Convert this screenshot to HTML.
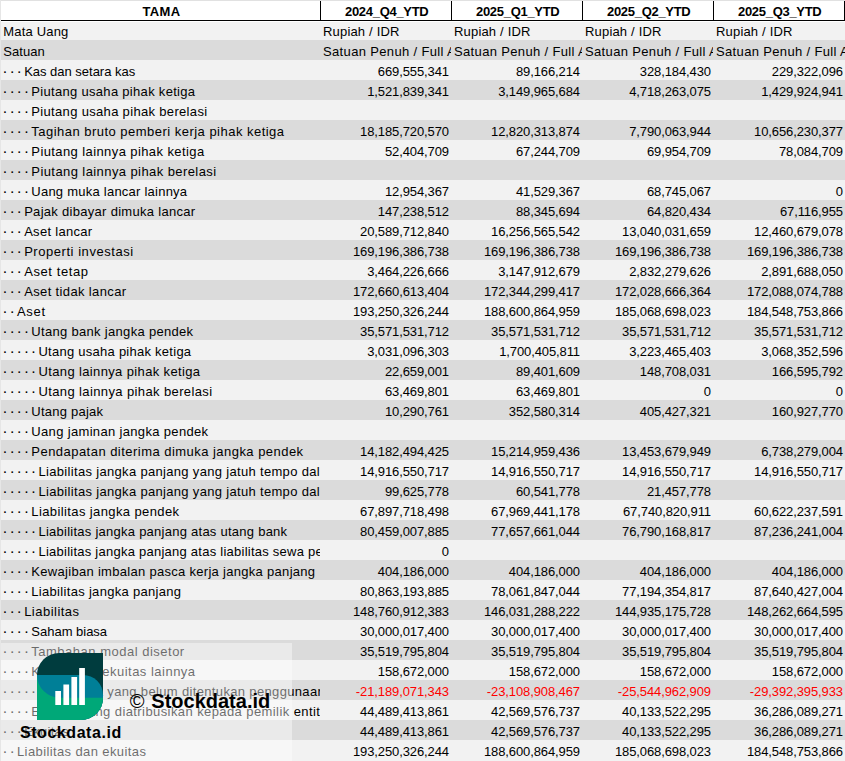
<!DOCTYPE html>
<html lang="id">
<head>
<meta charset="utf-8">
<title>TAMA</title>
<style>
html,body{margin:0;padding:0;}
body{width:845px;height:761px;overflow:hidden;position:relative;background:#f2f2f2;font-family:"Liberation Sans",sans-serif;font-size:13px;color:#000;}
.hd{position:absolute;left:0;top:0;width:845px;height:22px;background:#fff;box-sizing:border-box;border-top:1px solid #e1e1e1;border-bottom:1px solid #fff;font-weight:bold;z-index:2;}
.hd:after{content:"";position:absolute;left:0;top:19px;width:845px;height:1px;background:#000;}
.hd div{position:absolute;top:0;height:19px;line-height:21px;text-align:center;box-sizing:border-box;}
.hd .h0{left:0;width:320px;}
.hd .h1{left:320px;width:131px;border-left:1px solid #000;}
.hd .h2{left:451px;width:131px;border-left:1px solid #000;}
.hd .h3{left:582px;width:131px;border-left:1px solid #000;}
.hd .h4{left:713px;width:132px;border-left:1px solid #000;border-right:1px solid #000;}
.tb{position:absolute;left:0;top:20px;width:845px;}
.r{position:relative;height:20px;width:845px;}
.a{background:#f2f2f2;}
.b{background:#dbdbdb;}
.c{position:absolute;top:0;height:20px;line-height:24px;white-space:nowrap;overflow:hidden;box-sizing:border-box;text-align:right;padding-right:2px;}
.c0{left:0;width:320px;text-align:left;padding-left:2.7px;padding-right:0;}
.c1{left:321px;width:130px;}
.c2{left:452px;width:130px;}
.c3{left:583px;width:130px;}
.c4{left:714px;width:131px;}
.t{text-align:left;padding-left:2px;padding-right:0;}
.z{margin-left:0.6px;}
.n{color:#f00;}
.c1,.c2,.c3,.c4{letter-spacing:-0.1px;}
.t0{letter-spacing:0.18px;}
.t1{letter-spacing:0.35px;}
.hd .h1,.hd .h2,.hd .h3,.hd .h4{letter-spacing:-0.3px;padding-left:1.4px;}
.hd .h0{letter-spacing:0.4px;padding-left:3px;}
.d{font-size:10.5px;letter-spacing:0.37px;font-weight:bold;margin-left:0.8px;margin-right:-0.8px;}
.le{position:absolute;left:0;top:0;width:1px;height:761px;background:#e6e6e6;z-index:3;}
.ov{position:absolute;left:0;top:643px;width:292px;height:118px;background:rgba(255,255,255,.42);}
.logo{position:absolute;left:37px;top:653px;width:66px;height:67px;}
.wm1{position:absolute;left:20px;top:722px;font-weight:bold;font-size:16px;letter-spacing:0.55px;line-height:22px;white-space:nowrap;}
.wm2{position:absolute;left:129.7px;top:689px;font-size:20px;line-height:24px;white-space:nowrap;font-weight:bold;word-spacing:1.3px;}
.wm2 span{font-weight:normal;}
</style>
</head>
<body>
<div class="hd"><div class="h0">TAMA</div><div class="h1">2024_Q4_YTD</div><div class="h2">2025_Q1_YTD</div><div class="h3">2025_Q2_YTD</div><div class="h4">2025_Q3_YTD</div></div>
<div class="tb">
<div class="r a"><div class="c c0"><span class="z"></span><span style="letter-spacing:0.178px">Mata Uang</span></div><div class="c c1 t t0">Rupiah / IDR</div><div class="c c2 t t0">Rupiah / IDR</div><div class="c c3 t t0">Rupiah / IDR</div><div class="c c4 t t0">Rupiah / IDR</div></div>
<div class="r b"><div class="c c0"><span class="z"></span><span style="letter-spacing:0.063px">Satuan</span></div><div class="c c1 t t1">Satuan Penuh / Full Amount</div><div class="c c2 t t1">Satuan Penuh / Full Amount</div><div class="c c3 t t1">Satuan Penuh / Full Amount</div><div class="c c4 t t1">Satuan Penuh / Full Amount</div></div>
<div class="r a"><div class="c c0"><span class="d">· · · </span><span style="letter-spacing:-0.015px">Kas dan setara kas</span></div><div class="c c1">669,555,341</div><div class="c c2">89,166,214</div><div class="c c3">328,184,430</div><div class="c c4">229,322,096</div></div>
<div class="r b"><div class="c c0"><span class="d">· · · · </span><span style="letter-spacing:0.306px">Piutang usaha pihak ketiga</span></div><div class="c c1">1,521,839,341</div><div class="c c2">3,149,965,684</div><div class="c c3">4,718,263,075</div><div class="c c4">1,429,924,941</div></div>
<div class="r a"><div class="c c0"><span class="d">· · · · </span><span style="letter-spacing:0.327px">Piutang usaha pihak berelasi</span></div><div class="c c1"></div><div class="c c2"></div><div class="c c3"></div><div class="c c4"></div></div>
<div class="r b"><div class="c c0"><span class="d">· · · · </span><span style="letter-spacing:0.476px">Tagihan bruto pemberi kerja pihak ketiga</span></div><div class="c c1">18,185,720,570</div><div class="c c2">12,820,313,874</div><div class="c c3">7,790,063,944</div><div class="c c4">10,656,230,377</div></div>
<div class="r a"><div class="c c0"><span class="d">· · · · </span><span style="letter-spacing:0.404px">Piutang lainnya pihak ketiga</span></div><div class="c c1">52,404,709</div><div class="c c2">67,244,709</div><div class="c c3">69,954,709</div><div class="c c4">78,084,709</div></div>
<div class="r b"><div class="c c0"><span class="d">· · · · </span><span style="letter-spacing:0.416px">Piutang lainnya pihak berelasi</span></div><div class="c c1"></div><div class="c c2"></div><div class="c c3"></div><div class="c c4"></div></div>
<div class="r a"><div class="c c0"><span class="d">· · · · </span><span style="letter-spacing:0.238px">Uang muka lancar lainnya</span></div><div class="c c1">12,954,367</div><div class="c c2">41,529,367</div><div class="c c3">68,745,067</div><div class="c c4">0</div></div>
<div class="r b"><div class="c c0"><span class="d">· · · </span><span style="letter-spacing:0.294px">Pajak dibayar dimuka lancar</span></div><div class="c c1">147,238,512</div><div class="c c2">88,345,694</div><div class="c c3">64,820,434</div><div class="c c4">67,116,955</div></div>
<div class="r a"><div class="c c0"><span class="d">· · · </span><span style="letter-spacing:0.29px">Aset lancar</span></div><div class="c c1">20,589,712,840</div><div class="c c2">16,256,565,542</div><div class="c c3">13,040,031,659</div><div class="c c4">12,460,679,078</div></div>
<div class="r b"><div class="c c0"><span class="d">· · · </span><span style="letter-spacing:0.543px">Properti investasi</span></div><div class="c c1">169,196,386,738</div><div class="c c2">169,196,386,738</div><div class="c c3">169,196,386,738</div><div class="c c4">169,196,386,738</div></div>
<div class="r a"><div class="c c0"><span class="d">· · · </span><span style="letter-spacing:0.6px">Aset tetap</span></div><div class="c c1">3,464,226,666</div><div class="c c2">3,147,912,679</div><div class="c c3">2,832,279,626</div><div class="c c4">2,891,688,050</div></div>
<div class="r b"><div class="c c0"><span class="d">· · · </span><span style="letter-spacing:0.365px">Aset tidak lancar</span></div><div class="c c1">172,660,613,404</div><div class="c c2">172,344,299,417</div><div class="c c3">172,028,666,364</div><div class="c c4">172,088,074,788</div></div>
<div class="r a"><div class="c c0"><span class="d">· · </span><span style="letter-spacing:0.695px">Aset</span></div><div class="c c1">193,250,326,244</div><div class="c c2">188,600,864,959</div><div class="c c3">185,068,698,023</div><div class="c c4">184,548,753,866</div></div>
<div class="r b"><div class="c c0"><span class="d">· · · · </span><span style="letter-spacing:0.309px">Utang bank jangka pendek</span></div><div class="c c1">35,571,531,712</div><div class="c c2">35,571,531,712</div><div class="c c3">35,571,531,712</div><div class="c c4">35,571,531,712</div></div>
<div class="r a"><div class="c c0"><span class="d">· · · · · </span><span style="letter-spacing:0.257px">Utang usaha pihak ketiga</span></div><div class="c c1">3,031,096,303</div><div class="c c2">1,700,405,811</div><div class="c c3">3,223,465,403</div><div class="c c4">3,068,352,596</div></div>
<div class="r b"><div class="c c0"><span class="d">· · · · · </span><span style="letter-spacing:0.365px">Utang lainnya pihak ketiga</span></div><div class="c c1">22,659,001</div><div class="c c2">89,401,609</div><div class="c c3">148,708,031</div><div class="c c4">166,595,792</div></div>
<div class="r a"><div class="c c0"><span class="d">· · · · · </span><span style="letter-spacing:0.382px">Utang lainnya pihak berelasi</span></div><div class="c c1">63,469,801</div><div class="c c2">63,469,801</div><div class="c c3">0</div><div class="c c4">0</div></div>
<div class="r b"><div class="c c0"><span class="d">· · · · </span><span style="letter-spacing:0.24px">Utang pajak</span></div><div class="c c1">10,290,761</div><div class="c c2">352,580,314</div><div class="c c3">405,427,321</div><div class="c c4">160,927,770</div></div>
<div class="r a"><div class="c c0"><span class="d">· · · · </span><span style="letter-spacing:0.335px">Uang jaminan jangka pendek</span></div><div class="c c1"></div><div class="c c2"></div><div class="c c3"></div><div class="c c4"></div></div>
<div class="r b"><div class="c c0"><span class="d">· · · · </span><span style="letter-spacing:0.465px">Pendapatan diterima dimuka jangka pendek</span></div><div class="c c1">14,182,494,425</div><div class="c c2">15,214,959,436</div><div class="c c3">13,453,679,949</div><div class="c c4">6,738,279,004</div></div>
<div class="r a"><div class="c c0"><span class="d">· · · · · </span><span style="letter-spacing:0.322px">Liabilitas jangka panjang yang jatuh tempo dalam satu tahun atas utang bank</span></div><div class="c c1">14,916,550,717</div><div class="c c2">14,916,550,717</div><div class="c c3">14,916,550,717</div><div class="c c4">14,916,550,717</div></div>
<div class="r b"><div class="c c0"><span class="d">· · · · · </span><span style="letter-spacing:0.322px">Liabilitas jangka panjang yang jatuh tempo dalam satu tahun atas liabilitas sewa pembiayaan</span></div><div class="c c1">99,625,778</div><div class="c c2">60,541,778</div><div class="c c3">21,457,778</div><div class="c c4"></div></div>
<div class="r a"><div class="c c0"><span class="d">· · · · </span><span style="letter-spacing:0.392px">Liabilitas jangka pendek</span></div><div class="c c1">67,897,718,498</div><div class="c c2">67,969,441,178</div><div class="c c3">67,740,820,911</div><div class="c c4">60,622,237,591</div></div>
<div class="r b"><div class="c c0"><span class="d">· · · · · </span><span style="letter-spacing:0.253px">Liabilitas jangka panjang atas utang bank</span></div><div class="c c1">80,459,007,885</div><div class="c c2">77,657,661,044</div><div class="c c3">76,790,168,817</div><div class="c c4">87,236,241,004</div></div>
<div class="r a"><div class="c c0"><span class="d">· · · · · </span><span style="letter-spacing:0.246px">Liabilitas jangka panjang atas liabilitas sewa pembiayaan</span></div><div class="c c1">0</div><div class="c c2"></div><div class="c c3"></div><div class="c c4"></div></div>
<div class="r b"><div class="c c0"><span class="d">· · · · </span><span style="letter-spacing:0.297px">Kewajiban imbalan pasca kerja jangka panjang</span></div><div class="c c1">404,186,000</div><div class="c c2">404,186,000</div><div class="c c3">404,186,000</div><div class="c c4">404,186,000</div></div>
<div class="r a"><div class="c c0"><span class="d">· · · · </span><span style="letter-spacing:0.308px">Liabilitas jangka panjang</span></div><div class="c c1">80,863,193,885</div><div class="c c2">78,061,847,044</div><div class="c c3">77,194,354,817</div><div class="c c4">87,640,427,004</div></div>
<div class="r b"><div class="c c0"><span class="d">· · · </span><span style="letter-spacing:0.483px">Liabilitas</span></div><div class="c c1">148,760,912,383</div><div class="c c2">146,031,288,222</div><div class="c c3">144,935,175,728</div><div class="c c4">148,262,664,595</div></div>
<div class="r a"><div class="c c0"><span class="d">· · · · </span><span style="letter-spacing:-0.01px">Saham biasa</span></div><div class="c c1">30,000,017,400</div><div class="c c2">30,000,017,400</div><div class="c c3">30,000,017,400</div><div class="c c4">30,000,017,400</div></div>
<div class="r b"><div class="c c0"><span class="d">· · · · </span><span style="letter-spacing:0.501px">Tambahan modal disetor</span></div><div class="c c1">35,519,795,804</div><div class="c c2">35,519,795,804</div><div class="c c3">35,519,795,804</div><div class="c c4">35,519,795,804</div></div>
<div class="r a"><div class="c c0"><span class="d">· · · · </span><span style="letter-spacing:0.491px">Komponen ekuitas lainnya</span></div><div class="c c1">158,672,000</div><div class="c c2">158,672,000</div><div class="c c3">158,672,000</div><div class="c c4">158,672,000</div></div>
<div class="r b"><div class="c c0"><span class="d">· · · · · </span><span style="letter-spacing:0.345px">Saldo laba yang belum ditentukan penggunaannya</span></div><div class="c c1 n">-21,189,071,343</div><div class="c c2 n">-23,108,908,467</div><div class="c c3 n">-25,544,962,909</div><div class="c c4 n">-29,392,395,933</div></div>
<div class="r a"><div class="c c0"><span class="d">· · · · </span><span style="letter-spacing:0.414px">Ekuitas yang diatribusikan kepada pemilik entitas induk</span></div><div class="c c1">44,489,413,861</div><div class="c c2">42,569,576,737</div><div class="c c3">40,133,522,295</div><div class="c c4">36,286,089,271</div></div>
<div class="r b"><div class="c c0"><span class="d">· · · </span><span style="letter-spacing:0.3px">Ekuitas</span></div><div class="c c1">44,489,413,861</div><div class="c c2">42,569,576,737</div><div class="c c3">40,133,522,295</div><div class="c c4">36,286,089,271</div></div>
<div class="r a"><div class="c c0"><span class="d">· · </span><span style="letter-spacing:0.39px">Liabilitas dan ekuitas</span></div><div class="c c1">193,250,326,244</div><div class="c c2">188,600,864,959</div><div class="c c3">185,068,698,023</div><div class="c c4">184,548,753,866</div></div>
</div>
<div class="le"></div>
<div class="ov"></div>
<svg class="logo" viewBox="0 0 66 67">
<defs><clipPath id="lc"><path d="M22 0H66V45A22 22 0 0 1 44 67H0V22A22 22 0 0 1 22 0Z"/></clipPath></defs>
<g clip-path="url(#lc)">
<rect width="66" height="67" fill="#003c3e"/>
<path d="M0 22H46A20 20 0 0 1 66 42V67H0Z" fill="#007f97"/>
<path d="M0 22A22.8 22.8 0 0 0 22.8 44.8H66V67H0Z" fill="#00a878"/>
</g>
<rect x="18.3" y="38" width="5.7" height="14" fill="#fff"/>
<rect x="26.4" y="31.5" width="5.7" height="20.5" fill="#fff"/>
<rect x="34.4" y="24" width="5.7" height="28" fill="#fff"/>
<rect x="42.2" y="15" width="5.7" height="37" fill="#fff"/>
</svg>
<div class="wm1">Stockdata.id</div>
<div class="wm2"><span>©</span> Stockdata.id</div>
</body>
</html>
